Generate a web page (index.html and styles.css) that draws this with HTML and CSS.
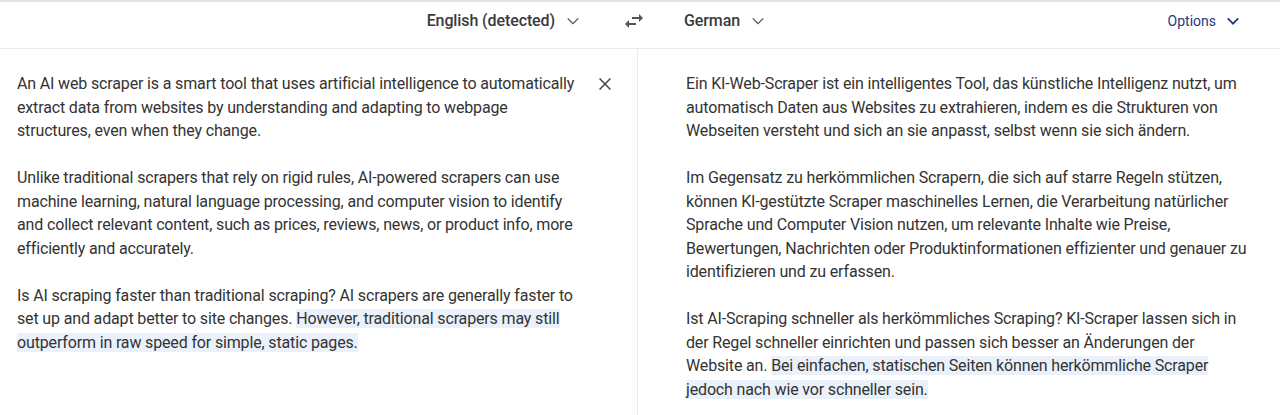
FILE: index.html
```html
<!DOCTYPE html>
<html>
<head>
<meta charset="utf-8">
<link rel="stylesheet" href="styles.css">
</head>
<body>
<div class="app">
  <header class="bar">
    <div class="src-lang">
      <span class="lang">English (detected)</span>
      <svg class="chev" viewBox="0 0 24 24" width="18" height="18"><path d="M5 8.5l7 7 7-7" fill="none" stroke="currentColor" stroke-width="1.8"/></svg>
    </div>
    <div class="swap">
      <svg viewBox="0 0 24 24" width="24" height="24"><path d="M6.99 11L3 15l3.99 4v-3H14v-2H6.99v-3zM21 9l-3.99-4v3H10v2h7.01v3L21 9z" fill="currentColor"/></svg>
    </div>
    <div class="tgt-lang">
      <span class="lang">German</span>
      <svg class="chev" viewBox="0 0 24 24" width="18" height="18"><path d="M5 8.5l7 7 7-7" fill="none" stroke="currentColor" stroke-width="1.8"/></svg>
      <span class="options">Options
        <svg class="chev" viewBox="0 0 24 24" width="18" height="18"><path d="M5 8.5l7 7 7-7" fill="none" stroke="currentColor" stroke-width="2.4"/></svg>
      </span>
    </div>
  </header>
  <main class="panes">
    <section class="pane src">
      <div class="text">
        <p>An AI web scraper is a smart tool that uses artificial intelligence to automatically extract data from websites by understanding and adapting to webpage structures, even when they change.</p>
        <p>Unlike traditional scrapers that rely on rigid rules, AI-powered scrapers can use machine learning, natural language processing, and computer vision to identify and collect relevant content, such as prices, reviews, news, or product info, more efficiently and accurately.</p>
        <p>Is AI scraping faster than traditional scraping? AI scrapers are generally faster to set up and adapt better to site changes. <span class="hl">However, traditional scrapers may still outperform in raw speed for simple, static pages.</span></p>
      </div>
      <div class="clear">
        <svg viewBox="0 0 24 24" width="20" height="20"><path d="M5.5 5.5l13 13M18.5 5.5l-13 13" fill="none" stroke="currentColor" stroke-width="1.8"/></svg>
      </div>
    </section>
    <section class="pane tgt">
      <div class="text">
        <p>Ein KI-Web-Scraper ist ein intelligentes Tool, das künstliche Intelligenz nutzt, um automatisch Daten aus Websites zu extrahieren, indem es die Strukturen von Webseiten versteht und sich an sie anpasst, selbst wenn sie sich ändern.</p>
        <p>Im Gegensatz zu herkömmlichen Scrapern, die sich auf starre Regeln stützen, können KI-gestützte Scraper maschinelles Lernen, die Verarbeitung natürlicher Sprache und Computer Vision nutzen, um relevante Inhalte wie Preise, Bewertungen, Nachrichten oder Produktinformationen effizienter und genauer zu identifizieren und zu erfassen.</p>
        <p>Ist AI-Scraping schneller als herkömmliches Scraping? KI-Scraper lassen sich in der Regel schneller einrichten und passen sich besser an Änderungen der Website an. <span class="hl">Bei einfachen, statischen Seiten können herkömmliche Scraper jedoch nach wie vor schneller sein.</span></p>
      </div>
    </section>
  </main>
</div>
</body>
</html>
```

FILE: styles.css
```css
html, body {
  margin: 0;
  padding: 0;
  background: #fff;
}
body {
  font-family: Roboto, "Noto Sans", sans-serif;
  color: #333;
  width: 1280px;
  height: 415px;
  overflow: hidden;
}
.app {
  border-top: 2px solid #e2e2e2;
}
.bar {
  display: grid;
  grid-template-columns: 612px 44px 1fr;
  align-items: center;
  height: 37px;
  padding-bottom: 9px;
  border-bottom: 1px solid #ececec;
}
.src-lang {
  display: flex;
  align-items: center;
  justify-content: flex-end;
  gap: 9px;
  padding-right: 30px;
}
.lang {
  font-size: 16px;
  font-weight: 500;
  color: #3a3a3a;
  letter-spacing: -0.1px;
}
.chev {
  color: #555;
  display: block;
}
.swap {
  display: flex;
  justify-content: center;
  color: #555;
}
.swap svg {
  display: block;
}
.tgt-lang {
  display: flex;
  align-items: center;
  gap: 9px;
  padding-left: 28px;
  padding-right: 38px;
}
.options {
  margin-left: auto;
  display: flex;
  align-items: center;
  gap: 8px;
  font-size: 14px;
  color: #22397a;
}
.options .chev {
  color: #22397a;
}
.panes {
  display: grid;
  grid-template-columns: 638px 1fr;
  height: 367px;
}
.pane {
  display: flex;
  padding-top: 23px;
}
.src {
  border-right: 1px solid #ececec;
  padding-left: 17px;
}
.tgt {
  padding-left: 48px;
}
.text {
  width: 563px;
  font-size: 16px;
  line-height: 23.5px;
  letter-spacing: -0.15px;
}
.text p {
  margin: 0 0 23.5px 0;
}
.hl {
  background: #eaf1fb;
}
.clear {
  margin-left: 15px;
  color: #444;
  padding-top: 2px;
}
.clear svg {
  display: block;
}
```
